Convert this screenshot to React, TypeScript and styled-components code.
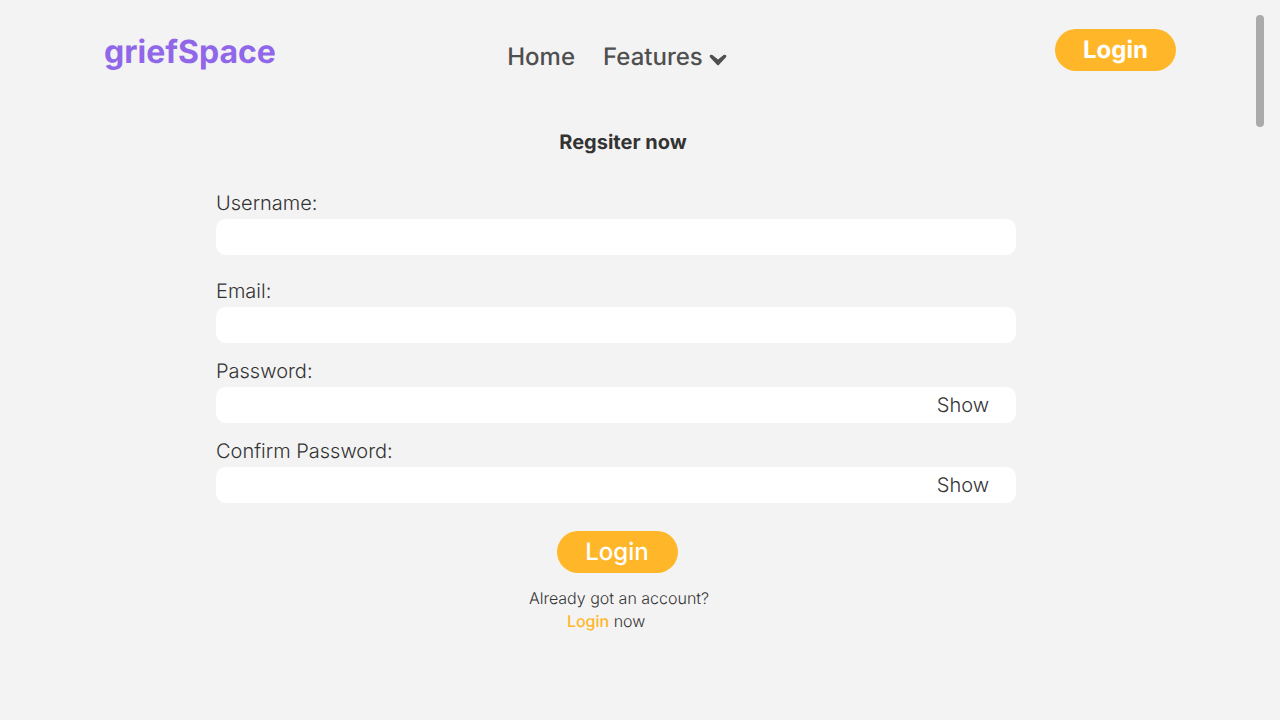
import React, { useId, useState } from "react";
import styled, { createGlobalStyle } from "styled-components";

const GlobalStyle = createGlobalStyle`
  *, *::before, *::after { box-sizing: border-box; }
  body {
    margin: 0;
    background: #f3f3f3;
    color: #333333;
    font-family: Inter, "Liberation Sans", sans-serif;
    text-rendering: geometricPrecision;
  }
  button, input { font: inherit; color: inherit; text-rendering: inherit; }
`;

const Page = styled.div`
  min-height: 100vh;
`;

const ScrollThumb = styled.div`
  position: fixed;
  top: 15px;
  right: 16px;
  width: 8px;
  height: 112px;
  border-radius: 4px;
  background: #aaaaaa;
`;

const Header = styled.header`
  display: grid;
  grid-template-columns: 1fr auto 1fr;
  align-items: start;
  padding: 29px 104px 0;
`;

const Logo = styled.a`
  justify-self: start;
  padding-top: 3px;
  font-size: 32px;
  line-height: 40px;
  font-weight: 700;
  color: #9067e9;
  text-decoration: none;
`;

const Nav = styled.nav`
  display: flex;
  gap: 28px;
  padding: 12px 46px 0 0;
  font-size: 24px;
  line-height: 32px;
  font-weight: 500;
  color: #4f4f4f;
`;

const NavLink = styled.a`
  color: inherit;
  text-decoration: none;
`;

const NavMenu = styled.button`
  display: flex;
  align-items: center;
  gap: 6px;
  padding: 0;
  border: 0;
  background: none;
  cursor: pointer;
`;

const Chevron = styled.svg`
  display: block;
  width: 18px;
  height: 12px;
  margin-top: 6px;
`;

const PillButton = styled.button<{ $weight: number }>`
  justify-self: end;
  width: 121px;
  height: 42px;
  padding: 0;
  border: 0;
  border-radius: 21px;
  background: #ffb729;
  color: #ffffff;
  font-size: 24px;
  line-height: 32px;
  font-weight: ${(p) => p.$weight};
  cursor: pointer;
`;

const Main = styled.main`
  display: flex;
  justify-content: center;
  padding: 55px 48px 64px 0;
`;

const Form = styled.form`
  display: flex;
  flex-direction: column;
  width: 100%;
  max-width: 800px;
`;

const Title = styled.h1`
  margin: 0 0 35px;
  padding-left: 14px;
  font-size: 20px;
  line-height: 28px;
  font-weight: 700;
  text-align: center;
`;

const Field = styled.div<{ $gap: number }>`
  display: flex;
  flex-direction: column;
  margin-bottom: ${(p) => p.$gap}px;
`;

const Label = styled.label`
  align-self: flex-start;
  font-size: 20px;
  line-height: 24px;
  font-weight: 300;
  padding-bottom: 4px;
`;

const InputBox = styled.div`
  display: flex;
  align-items: center;
  height: 36px;
  border-radius: 10px;
  background: #ffffff;
`;

const Input = styled.input`
  flex: 1;
  min-width: 0;
  height: 100%;
  padding: 0 12px;
  border: 0;
  border-radius: 10px;
  background: transparent;
  font-size: 20px;
  font-weight: 300;
`;

const ShowButton = styled.button`
  padding: 0 27px 0 8px;
  border: 0;
  background: none;
  font-size: 20px;
  line-height: 24px;
  font-weight: 300;
  cursor: pointer;
`;

const Actions = styled.div`
  display: flex;
  flex-direction: column;
  align-items: center;
  gap: 14px;
  padding: 12px 0 0 2px;
`;

const Hint = styled.div`
  padding-left: 4px;
  font-size: 16px;
  line-height: 23px;
  font-weight: 300;
`;

const HintLine = styled.p<{ $indent?: number }>`
  margin: 0;
  padding-left: ${(p) => p.$indent ?? 0}px;
`;

const HintLink = styled.a`
  color: #ffb729;
  font-weight: 500;
  text-decoration: none;
`;

interface TextFieldProps {
  label: string;
  name: string;
  type?: string;
  gap?: number;
}

function TextField({ label, name, type = "text", gap = 16 }: TextFieldProps) {
  const id = useId();
  const [visible, setVisible] = useState(false);
  const secret = type === "password";
  return (
    <Field $gap={gap}>
      <Label htmlFor={id}>{label}</Label>
      <InputBox>
        <Input id={id} name={name} type={secret && visible ? "text" : type} />
        {secret && (
          <ShowButton type="button" onClick={() => setVisible(!visible)}>
            {visible ? "Hide" : "Show"}
          </ShowButton>
        )}
      </InputBox>
    </Field>
  );
}

export default function App() {
  return (
    <Page>
      <GlobalStyle />
      <ScrollThumb />
      <Header>
        <Logo href="#">griefSpace</Logo>
        <Nav>
          <NavLink href="#">Home</NavLink>
          <NavMenu type="button" aria-haspopup="menu">
            Features
            <Chevron viewBox="0 0 18 12" aria-hidden="true">
              <path
                d="M0.8 2.9 Q0.4 1.8 1.2 1.1 Q2.3 0.3 3.4 1 L9 5.6 L14.6 1 Q15.7 0.3 16.8 1.1 Q17.6 1.8 17.2 2.9 L9.8 11 Q9 11.8 8.2 11 Z"
                fill="currentColor"
              />
            </Chevron>
          </NavMenu>
        </Nav>
        <PillButton type="button" $weight={700}>Login</PillButton>
      </Header>
      <Main>
        <Form onSubmit={(e) => e.preventDefault()}>
          <Title>Regsiter now</Title>
          <TextField label="Username:" name="username" gap={24} />
          <TextField label="Email:" name="email" type="email" />
          <TextField label="Password:" name="password" type="password" />
          <TextField label="Confirm Password:" name="confirm" type="password" />
          <Actions>
            <PillButton type="submit" $weight={500}>Login</PillButton>
            <Hint>
              <HintLine>Already got an account?</HintLine>
              <HintLine $indent={38}>
                <HintLink href="#">Login</HintLink> now
              </HintLine>
            </Hint>
          </Actions>
        </Form>
      </Main>
    </Page>
  );
}
